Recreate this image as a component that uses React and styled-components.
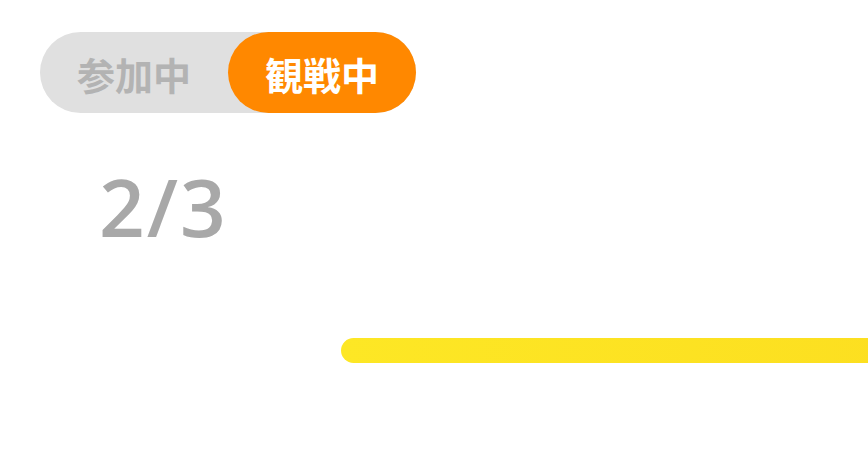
import React, { useState } from "react";
import styled, { createGlobalStyle } from "styled-components";

const Global = createGlobalStyle`
  html, body {
    margin: 0;
    padding: 0;
    background: #fff;
    overflow: hidden;
  }
`;

const Page = styled.div`
  width: 868px;
  height: 460px;
  padding: 32px 0 0 40px;
  box-sizing: border-box;
  overflow: hidden;
  font-family: "Noto Sans CJK JP", "Noto Sans", sans-serif;
`;

const Toggle = styled.div`
  display: inline-flex;
  height: 81px;
  border-radius: 41px;
  background: #e0e0e0;
`;

const Tab = styled.button`
  width: 188px;
  height: 100%;
  border: none;
  border-radius: 41px;
  padding: 2px 0 0;
  margin: 0;
  font-family: "Noto Sans CJK JP", sans-serif;
  font-weight: 700;
  font-size: 38px;
  line-height: 1;
  cursor: pointer;
  background: ${(p) => (p.$active ? "#ff8800" : "transparent")};
  color: ${(p) => (p.$active ? "#ffffff" : "#b3b3b3")};
`;

const Count = styled.div`
  margin: 53px 0 0 59px;
  font-family: "Open Sans", sans-serif;
  font-weight: 600;
  font-size: 80px;
  line-height: 80px;
  letter-spacing: 2px;
  color: #a8a8a8;
`;

const Progress = styled.div`
  margin: 92px 0 0 301px;
  width: 700px;
  height: 25px;
  border-radius: 13px;
  background: linear-gradient(90deg, #fde725 0%, #fcdd1f 100%);
`;

export default function App() {
  const [tab, setTab] = useState("watch");
  return (
    <Page>
      <Global />
      <Toggle>
        <Tab $active={tab === "join"} onClick={() => setTab("join")}>
          参加中
        </Tab>
        <Tab $active={tab === "watch"} onClick={() => setTab("watch")}>
          観戦中
        </Tab>
      </Toggle>
      <Count>2/3</Count>
      <Progress />
    </Page>
  );
}
